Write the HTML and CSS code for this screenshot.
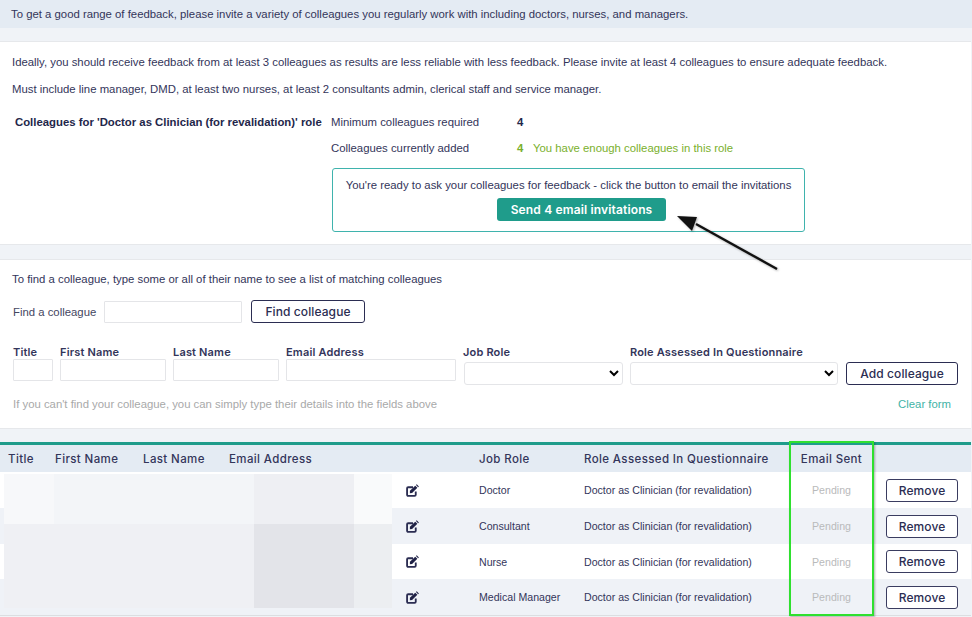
FILE: index.html
```html
<!DOCTYPE html>
<html lang="en">
<head>
    <meta charset="UTF-8">
    <meta name="viewport" content="width=device-width, initial-scale=1.0">
    <title>Invite colleagues</title>
    <link rel="stylesheet" href="styles.css">
</head>
<body>
    <div class="intro">To get a good range of feedback, please invite a variety of colleagues you regularly work with including doctors, nurses, and managers.</div>

    <div class="panel summary">
        <p>Ideally, you should receive feedback from at least 3 colleagues as results are less reliable with less feedback. Please invite at least 4 colleagues to ensure adequate feedback.</p>
        <p>Must include line manager, DMD, at least two nurses, at least 2 consultants admin, clerical staff and service manager.</p>
        <div class="role">
            <h2>Colleagues for 'Doctor as Clinician (for revalidation)' role</h2>
            <div class="role-detail">
                <div class="count">
                    <span class="count-label">Minimum colleagues required</span>
                    <strong>4</strong>
                </div>
                <div class="count count-ok">
                    <span class="count-label">Colleagues currently added</span>
                    <strong>4</strong>
                    <span>You have enough colleagues in this role</span>
                </div>
                <div class="ready">
                    <div>You're ready to ask your colleagues for feedback - click the button to email the invitations</div>
                    <button class="btn-send">Send 4 email invitations</button>
                </div>
            </div>
        </div>
    </div>

    <div class="panel finder">
        <p>To find a colleague, type some or all of their name to see a list of matching colleagues</p>
        <div class="find-row">
            <label for="find">Find a colleague</label>
            <input type="text" id="find">
            <button class="btn find-btn">Find colleague</button>
        </div>
        <div class="add-row">
            <div class="field"><label for="title">Title</label><input type="text" id="title" class="w-title"></div>
            <div class="field"><label for="first">First Name</label><input type="text" id="first" class="w-name"></div>
            <div class="field"><label for="last">Last Name</label><input type="text" id="last" class="w-name"></div>
            <div class="field"><label for="email">Email Address</label><input type="text" id="email" class="w-email"></div>
            <div class="field"><label for="job">Job Role</label><select id="job" class="w-job"></select></div>
            <div class="field"><label for="assessed">Role Assessed In Questionnaire</label><select id="assessed" class="w-assessed"></select></div>
            <button class="btn add-btn">Add colleague</button>
        </div>
        <div class="hint-row">
            <span class="hint">If you can't find your colleague, you can simply type their details into the fields above</span>
            <a href="#" class="clear">Clear form</a>
        </div>
    </div>

    <div class="list">
        <table>
            <thead>
                <tr>
                    <th class="c-title">Title</th>
                    <th class="c-first">First Name</th>
                    <th class="c-last">Last Name</th>
                    <th class="c-email">Email Address</th>
                    <th class="c-edit"></th>
                    <th class="c-job">Job Role</th>
                    <th class="c-role">Role Assessed In Questionnaire</th>
                    <th class="c-sent">Email Sent</th>
                    <th class="c-remove"></th>
                </tr>
            </thead>
            <tbody>
                <tr>
                    <td colspan="4"></td>
                    <td><svg class="edit" viewBox="0 0 12 12"><path d="M9 7v3a1 1 0 0 1-1 1H2a1 1 0 0 1-1-1V4a1 1 0 0 1 1-1h4.500" fill="none" stroke="#2b2d52" stroke-width="1.700"/><path d="M3.600 6.200 8.500 1.500l2 2L5.600 8.400l-2 .1zM9.200.9l.7-.7 2 2-.7.7z" fill="#1f2145"/></svg></td>
                    <td>Doctor</td>
                    <td>Doctor as Clinician (for revalidation)</td>
                    <td class="pending">Pending</td>
                    <td><button class="btn remove">Remove</button></td>
                </tr>
                <tr>
                    <td colspan="4"></td>
                    <td><svg class="edit" viewBox="0 0 12 12"><path d="M9 7v3a1 1 0 0 1-1 1H2a1 1 0 0 1-1-1V4a1 1 0 0 1 1-1h4.500" fill="none" stroke="#2b2d52" stroke-width="1.700"/><path d="M3.600 6.200 8.500 1.500l2 2L5.600 8.400l-2 .1zM9.200.9l.7-.7 2 2-.7.7z" fill="#1f2145"/></svg></td>
                    <td>Consultant</td>
                    <td>Doctor as Clinician (for revalidation)</td>
                    <td class="pending">Pending</td>
                    <td><button class="btn remove">Remove</button></td>
                </tr>
                <tr>
                    <td colspan="4"></td>
                    <td><svg class="edit" viewBox="0 0 12 12"><path d="M9 7v3a1 1 0 0 1-1 1H2a1 1 0 0 1-1-1V4a1 1 0 0 1 1-1h4.500" fill="none" stroke="#2b2d52" stroke-width="1.700"/><path d="M3.600 6.200 8.500 1.500l2 2L5.600 8.400l-2 .1zM9.200.9l.7-.7 2 2-.7.7z" fill="#1f2145"/></svg></td>
                    <td>Nurse</td>
                    <td>Doctor as Clinician (for revalidation)</td>
                    <td class="pending">Pending</td>
                    <td><button class="btn remove">Remove</button></td>
                </tr>
                <tr>
                    <td colspan="4"></td>
                    <td><svg class="edit" viewBox="0 0 12 12"><path d="M9 7v3a1 1 0 0 1-1 1H2a1 1 0 0 1-1-1V4a1 1 0 0 1 1-1h4.500" fill="none" stroke="#2b2d52" stroke-width="1.700"/><path d="M3.600 6.200 8.500 1.500l2 2L5.600 8.400l-2 .1zM9.200.9l.7-.7 2 2-.7.7z" fill="#1f2145"/></svg></td>
                    <td>Medical Manager</td>
                    <td>Doctor as Clinician (for revalidation)</td>
                    <td class="pending">Pending</td>
                    <td><button class="btn remove">Remove</button></td>
                </tr>
            </tbody>
        </table>

        <!-- blurred out names -->
        <div class="redacted">
            <i class="r1"></i><i class="r2"></i><i class="r3"></i><i class="r4"></i>
            <i class="r5"></i><i class="r5"></i><i class="r6"></i><i class="r7"></i>
        </div>
        <div class="highlight"></div>
    </div>

    <!-- annotation drawn on the screenshot -->
    <svg class="arrow" viewBox="0 0 110 64" width="110" height="64">
        <path d="M103 57 22 12" stroke="#111" stroke-width="2.400" fill="none"/>
        <path d="M3 4 23 5 18 19z" fill="#111"/>
    </svg>
</body>
</html>
```

FILE: styles.css
```css
* {
    box-sizing: border-box;
}
html, body {
    height: 617px;
    overflow: hidden;
}
body {
    position: relative;
    margin: 0;
    background-color: #f0f3f7;
    color: #33355a;
    font-family: "Liberation Sans", Arial, sans-serif;
    font-size: 11.350px;
}
p {
    margin: 0;
}
.intro {
    height: 28px;
    padding: 8px 11px 0;
    background-color: #e4ebf3;
}
.panel {
    margin-right: 1px;
    background-color: #fff;
    border-top: 1px solid #e6e8eb;
    border-bottom: 1px solid #e6e8eb;
}

/* summary */
.summary {
    height: 204px;
    margin-top: 13px;
    padding: 14px 12px 0;
}
.summary p {
    height: 28px;
}
.summary p:first-child {
    height: 27px;
}
.role {
    display: flex;
    margin-top: 4px;
}
.role h2 {
    width: 316px;
    margin: 0;
    padding-left: 3px;
    font-size: 11.350px;
    line-height: 14px;
    color: #23264a;
    white-space: nowrap;
}
.role-detail {
    padding-left: 3px;
}
.count {
    display: flex;
    height: 26px;
    line-height: 14px;
}
.count-label {
    width: 186px;
}
.count strong {
    width: 16px;
    color: #23264a;
}
.count-ok {
    height: 27px;
}
.count-ok, .count-ok strong {
    color: #7ab02c;
}
.count-ok .count-label {
    color: #33355a;
}
.ready {
    width: 473px;
    height: 64px;
    margin-left: 1px;
    padding-top: 9px;
    border: 1px solid #3fb3ad;
    border-radius: 3px;
    text-align: center;
    line-height: 14px;
}
.btn-send {
    display: block;
    width: 169px;
    height: 23px;
    margin: 6px 0 0 164px;
    background-color: #1f9c8b;
    color: #fff;
    border: none;
    border-radius: 3px;
    font-family: Inter, sans-serif;
    font-size: 12px;
    font-weight: 600;
    letter-spacing: 0.15px;
}

/* finder */
.finder {
    height: 170px;
    margin-top: 14px;
    padding: 13px 13px 0 12px;
}
.finder input, .finder select {
    height: 22px;
    background-color: #fff;
    border: 1px solid #e4e5e8;
    border-radius: 1px;
}
.btn {
    background-color: #fff;
    color: #2b2d52;
    border: 1px solid #2b2d52;
    border-radius: 3px;
    font-family: Inter, sans-serif;
    font-size: 12px;
    font-weight: 500;
    letter-spacing: 0.1px;
}
.find-row {
    display: flex;
    align-items: center;
    margin-top: 15px;
    padding-left: 1px;
}
.find-row label {
    width: 91px;
    color: #44465f;
}
.find-row input {
    width: 138px;
}
.find-btn {
    width: 114px;
    height: 23px;
    margin-left: 9px;
}
.add-row {
    display: flex;
    align-items: flex-end;
    gap: 7px;
    margin-top: 22px;
    padding-left: 1px;
}
.field {
    display: flex;
    flex-direction: column;
}
.field label {
    height: 14px;
    font-family: Inter, sans-serif;
    font-size: 11px;
    font-weight: 600;
    letter-spacing: 0.17px;
    line-height: 14px;
    white-space: nowrap;
}
.field:nth-child(-n+4) {
    align-self: flex-start;
}
.w-title { width: 40px; }
.w-name { width: 106px; }
.w-email { width: 170px; }
.finder select {
    height: 23px;
    margin-top: 3px;
    border-radius: 3px;
}
.w-job { width: 159px; margin-left: 1px; }
.w-assessed { width: 208px; }
.add-btn {
    width: 112px;
    height: 23px;
    margin-left: 1px;
}
.hint-row {
    display: flex;
    justify-content: space-between;
    margin-top: 12px;
    padding: 0 7px 0 1px;
    line-height: 14px;
}
.hint {
    color: #a8a9a9;
}
.clear {
    color: #3fb3a6;
    text-decoration: none;
}

/* colleague list */
.list {
    position: relative;
    margin-top: 13px;
    margin-right: 1px;
    border-top: 3px solid #1f9c8b;
    border-bottom: 1px solid #dcdee1;
}
table {
    width: 100%;
    border-collapse: collapse;
    table-layout: fixed;
}
th {
    height: 27px;
    padding: 0 0 0 8px;
    background-color: #e4ebf3;
    font-family: Inter, sans-serif;
    font-size: 11.500px;
    font-weight: 500;
    letter-spacing: 0.38px;
    text-align: left;
    white-space: nowrap;
}
td {
    height: 36px;
    padding: 0 0 0 8px;
    font-size: 10.600px;
}
tbody tr:nth-child(3) td {
    height: 35px;
}
tbody tr {
    background-color: #fff;
}
tbody tr:nth-child(even) {
    background-color: #eff2f7;
}
.c-title { width: 47px; }
.c-first { width: 88px; }
.c-last { width: 86px; }
.c-email { width: 176px; }
.c-edit { width: 74px; }
.c-job { width: 105px; }
.c-role { width: 213px; }
th.c-sent { width: 85px; padding: 0; text-align: center; }
.pending {
    padding: 0;
    color: #b9babb;
    text-align: center;
}
.edit {
    display: block;
    width: 13px;
    height: 13px;
    margin-left: 1px;
}
.remove {
    display: block;
    width: 72px;
    height: 23px;
    margin-left: 4px;
    border-color: #3a3c60;
}
.redacted {
    position: absolute;
    left: 4px;
    top: 29px;
    width: 388px;
    height: 134px;
    display: grid;
    grid-template-columns: 50px 200px 100px 38px;
    grid-template-rows: 50px 84px;
}
.r1 { background-color: #f7f8fa; }
.r2 { background-color: #f3f5f8; }
.r3 { background-color: #eeeff3; }
.r4 { background-color: #f9fafb; }
.r5 { background-color: #eff0f4; }
.r6 { background-color: #e3e4e9; }
.r7 { background-color: #eceef1; }
.highlight {
    position: absolute;
    left: 789px;
    top: -4px;
    width: 85px;
    height: 175px;
    border: 2px solid #2fe02f;
    box-shadow: 1px 1px 2px rgba(0, 0, 0, 0.3);
}
.arrow {
    position: absolute;
    left: 674px;
    top: 212px;
    filter: drop-shadow(1px 1px 1px rgba(0, 0, 0, 0.3));
}
```
